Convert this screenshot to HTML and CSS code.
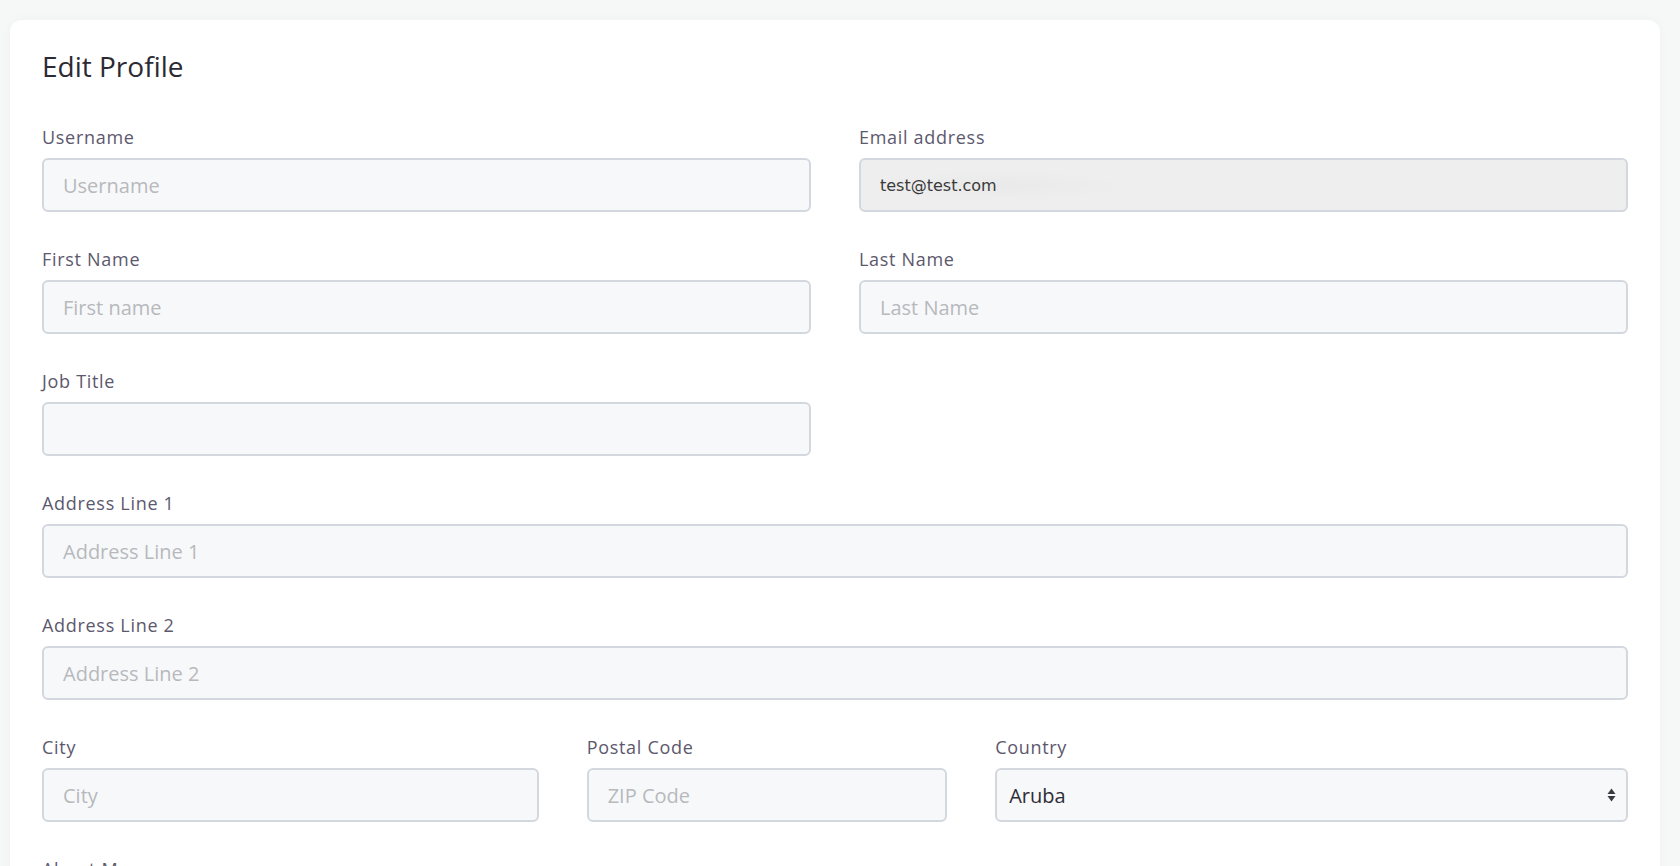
FILE: index.html
```html
<!DOCTYPE html>
<html lang="en">
<head>
  <meta charset="UTF-8" />
  <meta name="viewport" content="width=device-width, initial-scale=1.0" />
  <title>Edit Profile</title>
  <link rel="stylesheet" href="styles.css">
</head>
<body>
  <div class="card">
    <h1 class="card-title">Edit Profile</h1>

    <form class="profile-form">
      <div class="form-group col-6">
        <label for="username">Username</label>
        <input id="username" type="text" placeholder="Username">
      </div>
      <div class="form-group col-6">
        <label for="email">Email address</label>
        <div class="input disabled">
          <span class="autofill">test@test.com</span>
        </div>
      </div>

      <div class="form-group col-6">
        <label for="first-name">First Name</label>
        <input id="first-name" type="text" placeholder="First name">
      </div>
      <div class="form-group col-6">
        <label for="last-name">Last Name</label>
        <input id="last-name" type="text" placeholder="Last Name">
      </div>

      <div class="form-group col-6">
        <label for="job-title">Job Title</label>
        <input id="job-title" type="text">
      </div>

      <div class="form-group col-12">
        <label for="address1">Address Line 1</label>
        <input id="address1" type="text" placeholder="Address Line 1">
      </div>

      <div class="form-group col-12">
        <label for="address2">Address Line 2</label>
        <input id="address2" type="text" placeholder="Address Line 2">
      </div>

      <div class="form-group col-4">
        <label for="city">City</label>
        <input id="city" type="text" placeholder="City">
      </div>
      <div class="form-group col-3">
        <label for="zip">Postal Code</label>
        <input id="zip" type="text" placeholder="ZIP Code">
      </div>
      <div class="form-group col-5">
        <label for="country">Country</label>
        <div class="select">
          <span>Aruba</span>
          <svg width="9" height="16" viewBox="0 0 9 16">
            <path d="M4.5 1.5 L8.5 7 H0.5 Z" fill="#3a3a44"/>
            <path d="M4.5 14.5 L8.5 9 H0.5 Z" fill="#3a3a44"/>
          </svg>
        </div>
      </div>

      <div class="form-group col-12">
        <label for="about">About Me</label>
      </div>
    </form>
  </div>
</body>
</html>
```

FILE: styles.css
```css
body {
  margin: 0;
  padding: 20px 20px 0 10px;
  background: #f6f7f7;
  font-family: 'Open Sans', sans-serif;
  color: #2d2d35;
  height: 866px;
  box-sizing: border-box;
  overflow: hidden;
}
.card {
  background: #ffffff;
  border-radius: 12px;
  padding: 32px;
  box-shadow: 0 0 12px rgba(0, 0, 0, 0.03);
  min-height: 1000px;
}
.card-title {
  font-size: 28px;
  font-weight: 400;
  line-height: 1;
  margin: 0 0 45px;
  color: #2b2a33;
}

/* 12 column grid, same gutter as the columns */
.profile-form {
  display: grid;
  grid-template-columns: repeat(12, 1fr);
  column-gap: 48px;
}
.col-3 { grid-column: span 3; }
.col-4 { grid-column: span 4; }
.col-5 { grid-column: span 5; }
.col-6 { grid-column: span 6; }
.col-12 { grid-column: 1 / -1; }

.form-group {
  margin-bottom: 35px;
}
.form-group label {
  display: block;
  font-size: 18px;
  line-height: 24px;
  margin-bottom: 9px;
  color: #5c586d;
  letter-spacing: 0.7px;
}
.form-group input,
.input,
.select {
  display: flex;
  align-items: center;
  width: 100%;
  height: 54px;
  box-sizing: border-box;
  border: 2px solid #d3d7de;
  border-radius: 6px;
  background: #f7f8fa;
  padding: 0 19px;
  font-family: 'Open Sans', sans-serif;
  font-size: 20px;
  color: #333;
  outline: none;
}
.form-group input::placeholder {
  color: #b7b9bd;
}
.input.disabled {
  background: #eeeeee;
}
.autofill {
  font-family: 'DejaVu Sans', sans-serif;
  font-size: 16px;
  color: #3a3a3a;
  padding: 5px 125px 5px 0;
  border-radius: 14px;
  background: radial-gradient(ellipse at 50% 50%, rgba(0, 0, 0, 0.018), rgba(0, 0, 0, 0) 75%);
}
.select {
  justify-content: space-between;
  padding: 0 10px 0 12px;
  font-size: 20px;
  color: #2e2d35;
}
```
